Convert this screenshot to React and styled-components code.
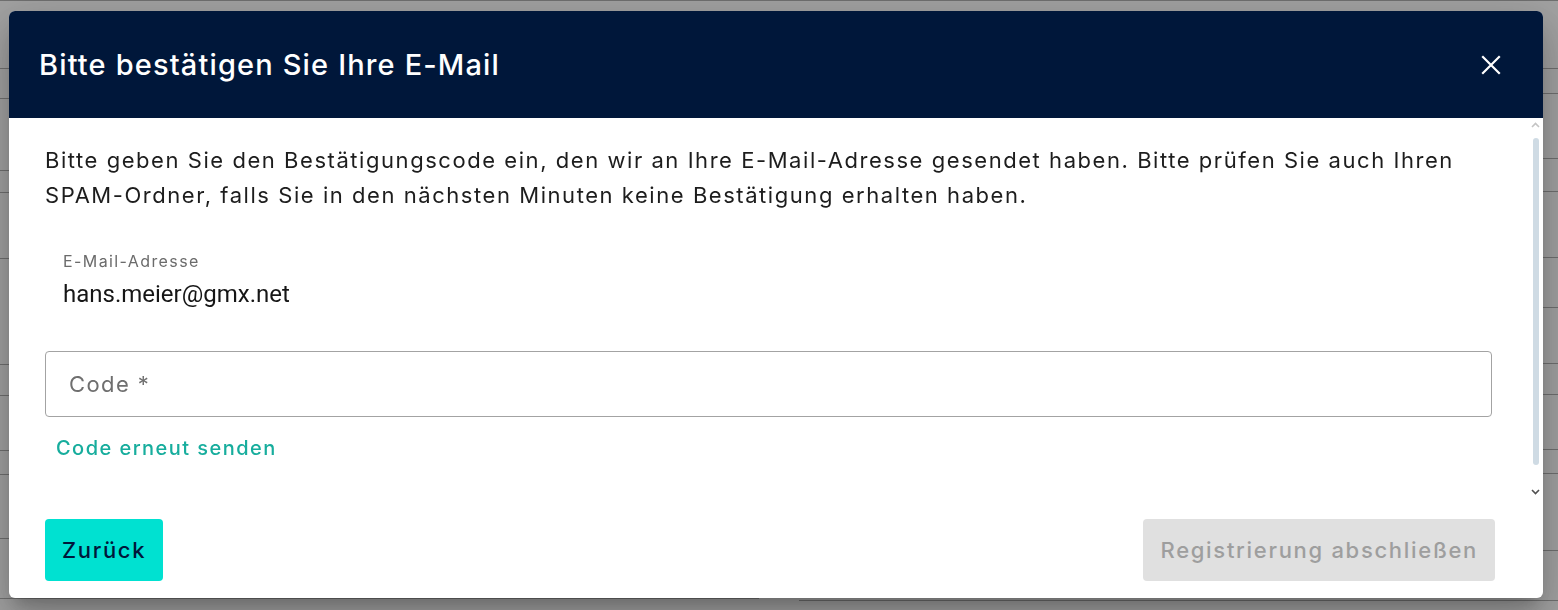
import React from 'react';
import styled, { createGlobalStyle } from 'styled-components';

const GlobalStyle = createGlobalStyle`
  html, body {
    margin: 0;
    padding: 0;
    height: 100%;
    overflow: hidden;
    background: #ffffff;
    font-family: Inter, "Noto Sans", sans-serif;
  }
  * { box-sizing: border-box; }
`;

const font = `Inter, "Noto Sans", sans-serif`;

// background page, dimmed by the overlay
const BgPage = styled.div`
  display: grid;
  grid-template-columns: 1fr 1fr;
  gap: 40px;
  height: 610px;
  padding: 3px 0 0 0;
  border-top: 1px solid #b0b0b0;
`;

const BgColumn = styled.div`
  display: flex;
  flex-direction: column;
`;

const BgRow = styled.div`
  height: ${({ h }) => h}px;
  border-bottom: 1px solid #b0b0b0;
  display: flex;
  align-items: center;
  justify-content: ${({ right }) => (right ? 'flex-end' : 'flex-start')};
  font-family: ${font};
  font-size: 20px;
  color: #555;
  padding: 0 4px;
`;

const Backdrop = styled.div`
  position: fixed;
  inset: 0;
  background: rgba(0, 0, 0, 0.37);
  display: flex;
  align-items: flex-start;
  padding: 11px 15px 12px 9px;
`;

const Dialog = styled.div`
  width: 1534px;
  height: 587px;
  background: #fff;
  border-radius: 6px;
  overflow: hidden;
  display: flex;
  flex-direction: column;
  box-shadow: 0 11px 15px -7px rgba(0,0,0,0.2), 0 24px 38px 3px rgba(0,0,0,0.14), 0 9px 46px 8px rgba(0,0,0,0.12);
`;

const Header = styled.div`
  height: 107px;
  flex: none;
  background: #00173a;
  display: flex;
  align-items: center;
  justify-content: space-between;
  padding: 0 40px 0 30px;
`;

const Title = styled.h2`
  margin: 0;
  font-family: ${font};
  font-weight: 500;
  font-size: 29px;
  letter-spacing: 1.15px;
  color: #fff;
`;

const CloseButton = styled.button`
  background: none;
  border: none;
  padding: 0;
  width: 24px;
  height: 24px;
  display: flex;
  align-items: center;
  justify-content: center;
  cursor: pointer;
`;

const Body = styled.div`
  height: 382px;
  flex: none;
  display: flex;
`;

const Content = styled.div`
  flex: 1;
  min-width: 0;
  overflow: hidden;
  padding: 25px 36px 0 36px;
`;

const ScrollRail = styled.div`
  width: 15px;
  flex: none;
  display: flex;
  flex-direction: column;
  align-items: center;
  padding-bottom: 1px;
`;

const RailArrow = styled.div`
  height: 14px;
  display: flex;
  align-items: center;
  justify-content: center;
`;

const RailThumb = styled.div`
  flex: 1;
  width: 6px;
  margin: 6px 0 20px 0;
  border-radius: 3px;
  background: #cfdbe4;
`;

const Intro = styled.p`
  margin: 0 0 38px 0;
  font-family: ${font};
  font-size: 22px;
  line-height: 35px;
  letter-spacing: 1.55px;
  color: #1d1d1d;
`;

const ReadonlyField = styled.div`
  display: flex;
  flex-direction: column;
  gap: 9px;
  padding-left: 18px;
  margin-bottom: 43px;
`;

const FieldLabel = styled.span`
  font-family: ${font};
  font-size: 16px;
  letter-spacing: 1.4px;
  color: #6b6b6b;
`;

const FieldValue = styled.span`
  font-family: Roboto, sans-serif;
  font-size: 24px;
  color: #161616;
`;

const CodeInput = styled.input`
  display: block;
  width: 100%;
  height: 66px;
  border: 1px solid #a3a3a3;
  border-radius: 4px;
  padding: 0 23px;
  font-family: ${font};
  font-size: 22px;
  letter-spacing: 1.4px;
  color: #222;
  outline: none;

  &::placeholder {
    color: #6f6f6f;
  }
`;

const ResendLink = styled.a`
  display: inline-block;
  margin: 19px 0 0 11px;
  font-family: ${font};
  font-size: 20px;
  font-weight: 500;
  letter-spacing: 1.45px;
  color: #17ad9d;
  text-decoration: none;
  cursor: pointer;
`;

const Footer = styled.div`
  flex: 1;
  display: flex;
  align-items: flex-start;
  justify-content: space-between;
  padding: 19px 48px 0 36px;
`;

const Button = styled.button`
  height: 62px;
  padding: 0 17px;
  border: none;
  border-radius: 4px;
  font-family: ${font};
  font-size: 22px;
  font-weight: 500;
  letter-spacing: 1.7px;
  background: ${({ primary }) => (primary ? '#00e1d1' : '#e0e0e0')};
  color: ${({ primary }) => (primary ? '#00173a' : '#9e9e9e')};
  cursor: ${({ disabled }) => (disabled ? 'default' : 'pointer')};
`;

const leftRows = [
  { h: 65 }, { h: 30, t: 'e' }, { h: 72, t: 'e' }, { h: 22 }, { h: 66, t: '' },
  { h: 106, t: 'ri' }, { h: 31 }, { h: 55, t: 'n' }, { h: 24 }, { h: 64, t: 't' }, { h: 60, t: 'm' },
];
const rightRows = [
  { h: 65 }, { h: 25 }, { h: 65 }, { h: 33 }, { h: 66 }, { h: 50 }, { h: 56 },
  { h: 31 }, { h: 55 }, { h: 24 }, { h: 77 }, { h: 50 },
];

const Chevron = ({ up, color }) => (
  <svg width="9" height="6" viewBox="0 0 9 6">
    <path
      d={up ? 'M1 5 L4.5 1.5 L8 5' : 'M1 1 L4.5 4.5 L8 1'}
      fill="none"
      stroke={color}
      strokeWidth="1.6"
    />
  </svg>
);

export default function App() {
  return (
    <>
      <GlobalStyle />
      <BgPage>
        <BgColumn>
          {leftRows.map((r, i) => (
            <BgRow key={i} h={r.h} right>{r.t}</BgRow>
          ))}
        </BgColumn>
        <BgColumn>
          {rightRows.map((r, i) => (
            <BgRow key={i} h={r.h} />
          ))}
        </BgColumn>
      </BgPage>
      <Backdrop>
        <Dialog role="dialog" aria-labelledby="dlg-title">
          <Header>
            <Title id="dlg-title">Bitte bestätigen Sie Ihre E-Mail</Title>
            <CloseButton aria-label="Schließen">
              <svg width="20" height="20" viewBox="0 0 20 20">
                <path d="M2 2 L18 18 M18 2 L2 18" stroke="#fff" strokeWidth="2.2" strokeLinecap="square" />
              </svg>
            </CloseButton>
          </Header>
          <Body>
            <Content>
              <Intro>
                Bitte geben Sie den Bestätigungscode ein, den wir an Ihre E-Mail-Adresse gesendet haben. Bitte prüfen Sie auch Ihren SPAM-Ordner, falls Sie in den nächsten Minuten keine Bestätigung erhalten haben.
              </Intro>
              <ReadonlyField>
                <FieldLabel>E-Mail-Adresse</FieldLabel>
                <FieldValue>hans.meier@gmx.net</FieldValue>
              </ReadonlyField>
              <CodeInput placeholder="Code *" />
              <ResendLink>Code erneut senden</ResendLink>
            </Content>
            <ScrollRail>
              <RailArrow><Chevron up color="#c4c4c4" /></RailArrow>
              <RailThumb />
              <RailArrow><Chevron color="#505050" /></RailArrow>
            </ScrollRail>
          </Body>
          <Footer>
            <Button primary>Zurück</Button>
            <Button disabled>Registrierung abschließen</Button>
          </Footer>
        </Dialog>
      </Backdrop>
    </>
  );
}
